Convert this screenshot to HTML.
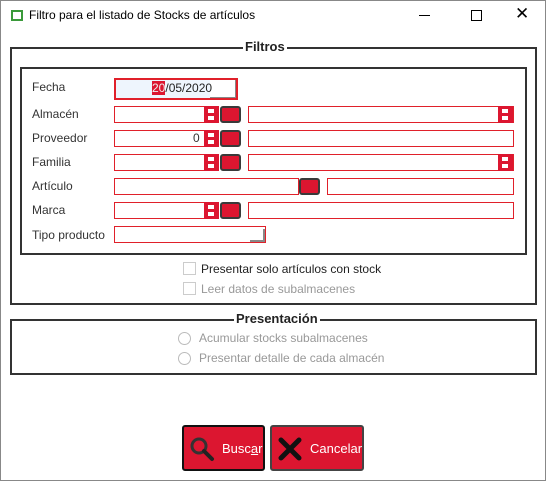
<!DOCTYPE html><html><head><style>
body{margin:0;width:546px;height:481px;background:#fff;font-family:"Liberation Sans",sans-serif;position:relative;overflow:hidden}
.a{position:absolute;box-sizing:border-box}
.t{position:absolute;font-size:12px;color:#333;white-space:nowrap}
.f{position:absolute;box-sizing:border-box;border:1px solid #e0202a;background:#fff;height:17px}
.sp{position:absolute;background:#dc1630;width:15px;height:17px;box-sizing:border-box}
.sp:before,.sp:after{content:"";position:absolute;left:4px;width:6px;height:4px;background:#fff}
.sp:before{top:3px}.sp:after{top:10px}
.b{position:absolute;box-sizing:border-box;width:21px;height:17px;background:#dc1630;border:2px solid #3a3a3a;border-radius:3px}
.gl{position:absolute;border:2px solid #333;box-sizing:border-box}
.cb{position:absolute;width:13px;height:13px;border:1px solid #ccc;box-sizing:border-box}
.rd{position:absolute;width:13px;height:13px;border:1px solid #bbb;border-radius:50%;box-sizing:border-box}
</style></head><body>
<div class="a" style="left:0;top:0;width:546px;height:481px;border:1px solid #888"></div>
<div class="a" style="left:11px;top:10px;width:12px;height:11px;border:2px solid #3a9a3a"></div>
<div class="t" style="left:29px;top:8px;font-size:12px;color:#000">Filtro para el listado de Stocks de artículos</div>
<div class="a" style="left:419px;top:15px;width:11px;height:1px;background:#000"></div>
<div class="a" style="left:471px;top:10px;width:11px;height:11px;border:1px solid #000"></div>
<div class="t" style="left:515px;top:4px;font-size:17px;color:#000">✕</div>

<div class="gl" style="left:10px;top:47px;width:527px;height:258px"></div>
<div class="t" style="left:243px;top:39px;font-size:13px;font-weight:bold;background:#fff;padding:0 2px;color:#222">Filtros</div>
<div class="gl" style="left:20px;top:67px;width:507px;height:188px"></div>

<div class="t" style="left:32px;top:80px">Fecha</div>
<div class="a" style="left:114px;top:78px;width:124px;height:22px;border:2px solid #e0202a;background:#eef5fd"></div>
<div class="a" style="left:210px;top:80px;width:26px;height:18px;background:#fff;border-right:1px solid #888;border-bottom:1px solid #888"></div>
<div class="t" style="left:152px;top:81px;color:#222;line-height:15px"><span style="background:#dc1630;color:#eee">20</span>/05/2020</div>

<div class="t" style="left:32px;top:107px">Almacén</div>
<div class="f" style="left:114px;top:106px;width:105px"></div><div class="sp" style="left:204px;top:106px"></div><div class="b" style="left:220px;top:106px"></div>
<div class="f" style="left:248px;top:106px;width:266px"></div><div class="sp" style="left:498px;top:106px"></div>

<div class="t" style="left:32px;top:131px">Proveedor</div>
<div class="f" style="left:114px;top:130px;width:105px"></div><div class="sp" style="left:204px;top:130px"></div><div class="b" style="left:220px;top:130px"></div>
<div class="t" style="left:193px;top:131px">0</div>
<div class="f" style="left:248px;top:130px;width:266px"></div>

<div class="t" style="left:32px;top:155px">Familia</div>
<div class="f" style="left:114px;top:154px;width:105px"></div><div class="sp" style="left:204px;top:154px"></div><div class="b" style="left:220px;top:154px"></div>
<div class="f" style="left:248px;top:154px;width:266px"></div><div class="sp" style="left:498px;top:154px"></div>

<div class="t" style="left:32px;top:179px">Artículo</div>
<div class="f" style="left:114px;top:178px;width:185px"></div><div class="b" style="left:299px;top:178px"></div>
<div class="f" style="left:327px;top:178px;width:187px"></div>

<div class="t" style="left:32px;top:203px">Marca</div>
<div class="f" style="left:114px;top:202px;width:105px"></div><div class="sp" style="left:204px;top:202px"></div><div class="b" style="left:220px;top:202px"></div>
<div class="f" style="left:248px;top:202px;width:266px"></div>

<div class="t" style="left:32px;top:228px">Tipo producto</div>
<div class="f" style="left:114px;top:226px;width:152px"></div>
<div class="a" style="left:250px;top:240px;width:15px;height:2px;background:#888"></div>
<div class="a" style="left:263px;top:229px;width:2px;height:13px;background:#888"></div>

<div class="cb" style="left:183px;top:262px"></div>
<div class="t" style="left:201px;top:262px;font-size:12px;color:#222">Presentar solo artículos con stock</div>
<div class="cb" style="left:183px;top:282px"></div>
<div class="t" style="left:201px;top:282px;font-size:12px;color:#999">Leer datos de subalmacenes</div>

<div class="gl" style="left:10px;top:319px;width:527px;height:56px"></div>
<div class="t" style="left:234px;top:311px;font-size:13px;font-weight:bold;background:#fff;padding:0 2px;color:#222">Presentación</div>
<div class="rd" style="left:178px;top:332px"></div>
<div class="t" style="left:199px;top:331px;color:#999">Acumular stocks subalmacenes</div>
<div class="rd" style="left:178px;top:352px"></div>
<div class="t" style="left:199px;top:351px;color:#999">Presentar detalle de cada almacén</div>

<div class="a" style="left:182px;top:425px;width:83px;height:46px;background:#dc1630;border:2px solid #111;border-radius:3px"></div>
<svg class="a" style="left:189px;top:436px" width="26" height="26"><circle cx="10" cy="10" r="7" fill="none" stroke="#333" stroke-width="3"/><line x1="15" y1="15" x2="23" y2="23" stroke="#222" stroke-width="4" stroke-linecap="round"/></svg>
<div class="t" style="left:222px;top:441px;font-size:13px;color:#fff">Busc<u>a</u>r</div>
<div class="a" style="left:270px;top:425px;width:94px;height:46px;background:#dc1630;border:2px solid #444;border-radius:3px"></div>
<svg class="a" style="left:278px;top:437px" width="24" height="24"><path d="M3 3L21 21M21 3L3 21" stroke="#111" stroke-width="5" stroke-linecap="round"/></svg>
<div class="t" style="left:310px;top:441px;font-size:13px;color:#fff">Cancelar</div>
</body></html>
